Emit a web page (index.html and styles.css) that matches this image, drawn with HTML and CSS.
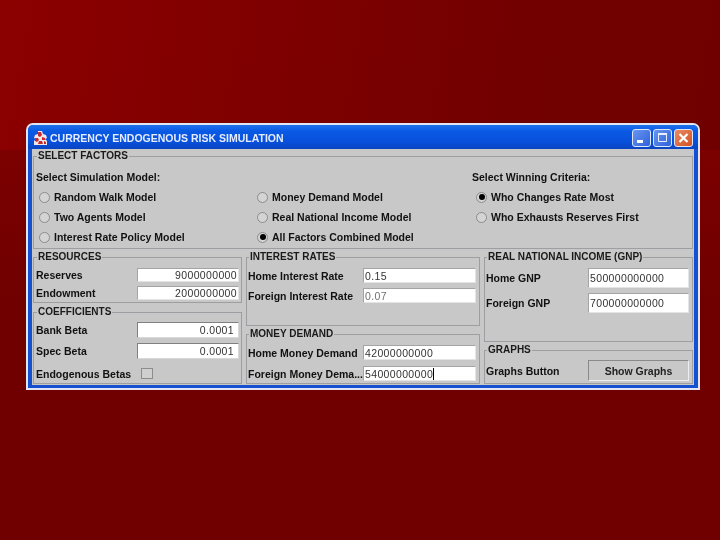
FILE: index.html
```html
<!DOCTYPE html>
<html lang="en">
<head>
<meta charset="utf-8">
<title>Currency Endogenous Risk Simulation</title>
<link rel="stylesheet" href="styles.css">
</head>
<body>
<div class="window">
  <div class="titlebar">
    <svg class="app-icon" width="15" height="16" viewBox="0 0 15 16"><path d="M5 1h4l1 3 3 1 1 3-2 1 2 2 0 4H1l0-4 2-2-2-1 1-3 3-1z" fill="#f2e6e6"/><path d="M5 2l3 0 1 3-2 2-2-1zM2 8l3 0 1 2-2 2-2-1zM9 7l3 1 0 2-3 0zM6 11l3 0 1 3H5zM11 11l2 1 0 2-2 0z" fill="#c42a30"/></svg>
    <span class="title-text">CURRENCY ENDOGENOUS RISK SIMULATION</span>
    <div class="win-buttons">
      <span class="win-btn min"><svg width="19" height="18" viewBox="0 0 19 18"><rect x="5" y="11" width="6" height="3" fill="#fff"/></svg></span>
      <span class="win-btn max"><svg width="19" height="18" viewBox="0 0 19 18"><path d="M5.5 4.5h8v8h-8z" fill="none" stroke="#e8f0ff"/><path d="M5 5h9" stroke="#e8f0ff" stroke-width="2"/></svg></span>
      <span class="win-btn close"><svg width="19" height="18" viewBox="0 0 19 18"><path d="M5.5 5l8 8M13.5 5l-8 8" stroke="#fff" stroke-width="2.2"/></svg></span>
    </div>
  </div>
  <div class="content">
    <fieldset class="panel factors">
      <legend>SELECT FACTORS</legend>
      <div class="factor-grid">
        <div class="factor-col">
          <div class="heading">Select Simulation Model:</div>
          <div class="radio-row"><span class="radio"></span>Random Walk Model</div>
          <div class="radio-row"><span class="radio"></span>Two Agents Model</div>
          <div class="radio-row"><span class="radio"></span>Interest Rate Policy Model</div>
        </div>
        <div class="factor-col">
          <div class="heading"></div>
          <div class="radio-row"><span class="radio"></span>Money Demand Model</div>
          <div class="radio-row"><span class="radio"></span>Real National Income Model</div>
          <div class="radio-row"><span class="radio on"></span>All Factors Combined Model</div>
        </div>
        <div class="factor-col">
          <div class="heading">Select Winning Criteria:</div>
          <div class="radio-row"><span class="radio on"></span>Who Changes Rate Most</div>
          <div class="radio-row"><span class="radio"></span>Who Exhausts Reserves First</div>
        </div>
      </div>
    </fieldset>
    <div class="columns">
      <div class="column col-left">
        <fieldset class="panel resources">
          <legend>RESOURCES</legend>
          <div class="row r1"><span class="label">Reserves</span><span class="field right">9000000000</span></div>
          <div class="row r1"><span class="label">Endowment</span><span class="field right">2000000000</span></div>
        </fieldset>
        <fieldset class="panel coefficients">
          <legend>COEFFICIENTS</legend>
          <div class="row r3"><span class="label">Bank Beta</span><span class="field right deep">0.0001</span></div>
          <div class="row r3"><span class="label">Spec Beta</span><span class="field right deep">0.0001</span></div>
          <div class="row r5"><span class="label">Endogenous Betas</span><span class="checkbox"></span></div>
        </fieldset>
      </div>
      <div class="column col-mid">
        <fieldset class="panel interest">
          <legend>INTEREST RATES</legend>
          <div class="row m1"><span class="label">Home Interest Rate</span><span class="field">0.15</span></div>
          <div class="row m1"><span class="label">Foreign Interest Rate</span><span class="field faint">0.07</span></div>
        </fieldset>
        <fieldset class="panel money">
          <legend>MONEY DEMAND</legend>
          <div class="row m3"><span class="label">Home Money Demand</span><span class="field">42000000000</span></div>
          <div class="row m3"><span class="label">Foreign Money Dema...</span><span class="field"><span class="caret">54000000000</span></span></div>
        </fieldset>
      </div>
      <div class="column col-right">
        <fieldset class="panel gnp">
          <legend>REAL NATIONAL INCOME (GNP)</legend>
          <div class="row g1"><span class="label">Home GNP</span><span class="field">500000000000</span></div>
          <div class="row g1"><span class="label">Foreign GNP</span><span class="field">700000000000</span></div>
        </fieldset>
        <fieldset class="panel graphs">
          <legend>GRAPHS</legend>
          <div class="row g3"><span class="label">Graphs Button</span><button class="button" type="button">Show Graphs</button></div>
        </fieldset>
      </div>
    </div>
  </div>
</div>
</body>
</html>
```
FILE: styles.css
```css
* { box-sizing: border-box; }
html, body { margin: 0; height: 540px; overflow: hidden; }
body {
  padding: 123px 0 0 26px;
  background:
    linear-gradient(100deg, #8c0000 0%, #820000 28%, #7a0000 50%, #720000 72%, #700000 100%) top left / 100% 150px no-repeat,
    linear-gradient(180deg, #7c0000 150px, #700000 300px);
  font-family: "Liberation Sans", Arial, sans-serif;
  font-size: 10.5px;
  font-weight: bold;
  color: #111;
}
.window {
  width: 674px;
  height: 267px;
  background: #1450d0;
  border: 2px solid #e2e6f2;
  border-radius: 7px 7px 0 0;
  padding: 0 4px 3px;
  display: flex;
  flex-direction: column;
  filter: blur(0.4px);
}
.titlebar {
  height: 24px;
  flex: none;
  margin: 0 -4px;
  padding: 2px 5px 0 5px;
  display: flex;
  align-items: center;
  gap: 2px;
  border-radius: 5px 5px 0 0;
  background: linear-gradient(180deg, #1e70ec 0%, #0a5ae4 25%, #0850dc 70%, #0a44c0 100%);
}
.title-text { color: #e6ecff; font-size: 10.5px; flex: 1; }
.win-buttons { display: flex; gap: 2px; }
.win-btn { width: 19px; height: 18px; border: 1px solid #dfe8fb; border-radius: 3px; display: flex; }
.win-btn svg { margin: -1px; flex: none; }
.min, .max { background: linear-gradient(135deg, #6a96ee, #2e62dc); }
.close { background: linear-gradient(135deg, #e88c66, #d4501f); }
.content {
  flex: 1;
  min-height: 0;
  background: #c8c8c8;
  padding: 1px;
  display: flex;
  flex-direction: column;
  gap: 2px;
}
.panel {
  margin: 0;
  padding: 0;
  border: 1px solid #9c9ea2;
  min-width: 0;
}
.panel legend {
  margin-left: 1px;
  padding: 0 1px;
  height: 12px;
  line-height: 12px;
  font-size: 10px;
  color: #1a1a1a;
}
.factors { height: 99px; flex: none; padding: 0 2px; }
.factor-grid { display: grid; grid-template-columns: 218px 218px 1fr; }
.heading { height: 14px; line-height: 14px; margin: 8px 0 3px; }
.radio-row { height: 20px; display: flex; align-items: center; gap: 4px; padding-left: 3px; white-space: nowrap; }
.factor-col:last-child .radio-row { padding-left: 4px; }
.radio {
  width: 11px; height: 11px; border: 1px solid #8a8c90; border-radius: 50%;
  background: #d4d4d4; flex: none; display: flex; align-items: center; justify-content: center;
}
.radio.on::after { content: ""; width: 6px; height: 6px; border-radius: 50%; background: #000; }
.columns { display: flex; gap: 4px; flex: 1; min-height: 0; }
.column { display: flex; flex-direction: column; }
.col-left { width: 209px; gap: 3px; }
.col-mid { width: 234px; gap: 2px; }
.col-right { width: 209px; gap: 2px; }
.resources { height: 52px; flex: none; padding: 5px 2px 0; }
.coefficients { flex: 1; padding: 4px 2px 0; }
.interest { height: 75px; flex: none; padding: 5px 3px 0 1px; }
.money { flex: 1; padding: 5px 3px 0 1px; }
.gnp { height: 91px; flex: none; padding: 5px 3px 0 1px; }
.graphs { flex: 1; padding: 4px 3px 0 1px; }
.row { display: flex; align-items: center; justify-content: space-between; }
.label { white-space: nowrap; }
.field {
  flex: none;
  background: #fff;
  border: 1px solid #a4a4a4;
  border-right-color: #e4e4e4;
  border-bottom-color: #e4e4e4;
  font-weight: normal;
  color: #333;
  height: 100%;
  display: flex;
  align-items: center;
  padding: 0 1px;
  font-size: 10.5px;
  letter-spacing: 0.35px;
}
.field.right { justify-content: flex-end; }
.field.deep { padding-right: 4px; border-color: #808080 #d8d8d8 #d8d8d8 #808080; }
.faint { color: #707070; }
.col-left .field { width: 102px; }
.col-mid .field { width: 113px; }
.col-right .field { width: 101px; }
.r1 { height: 14px; margin-bottom: 4px; }
.r3 { height: 16px; margin-bottom: 5px; }
.r5 { height: 19px; justify-content: flex-start; }
.r5 .label { width: 105px; }
.m1 { height: 15px; margin-bottom: 5px; }
.m3 { height: 15px; margin-bottom: 6px; }
.m3:last-child { margin-bottom: 0; }
.g1 { height: 20px; margin-bottom: 5px; }
.g3 { height: 21px; }
.caret { border-right: 1px solid #000; }
.checkbox { width: 12px; height: 11px; border: 1px solid #8c8c8c; background: #cfcfcf; }
.button {
  width: 101px; height: 100%;
  font: inherit;
  color: #222;
  background: #c8c8c8;
  border: 1px solid #8a8a8a;
  border-right-color: #eee;
  border-bottom-color: #eee;
  padding: 0;
}
```
